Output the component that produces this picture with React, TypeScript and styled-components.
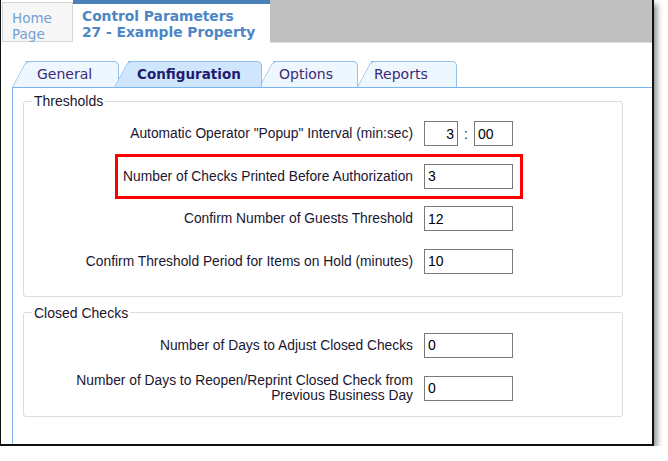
import React, { FC } from "react";
import styled, { createGlobalStyle } from "styled-components";

const GlobalStyle = createGlobalStyle`
  body {
    margin: 0;
    background: #fff;
    font-family: "Liberation Sans", Arial, sans-serif;
  }
`;

const Window = styled.div`
  width: 651px;
  height: 444px;
  display: flex;
  flex-direction: column;
  background: #fff;
  border-left: 1px solid #111;
  border-right: 2px solid #111;
  border-bottom: 2px solid #111;
  box-shadow: 3px 4px 6px rgba(0, 0, 0, 0.45);
`;

const Header = styled.div`
  display: flex;
  height: 43px;
  font-family: "DejaVu Sans", Verdana, sans-serif;
  line-height: 16px;
`;

const HomeTab = styled.div`
  box-sizing: border-box;
  width: 71px;
  height: 40px;
  margin: 2px 0 0 1px;
  padding: 7px 0 0 9px;
  background: #f7f7f7;
  border: 1px solid #d6d6d6;
  color: #73a0d4;
  font-size: 13.5px;
`;

const PageTab = styled.div`
  box-sizing: border-box;
  width: 197px;
  height: 43px;
  padding: 4px 0 0 9px;
  border-top: 4px solid #4a7fb8;
  background: #fff;
  color: #4c86c4;
  font-size: 13.8px;
  font-weight: bold;
`;

const HeaderFill = styled.div`
  flex: 1;
  height: 42px;
  background: #c0c0c0;
  border-bottom: 1px solid #dedede;
`;

const Content = styled.div`
  flex: 1;
  display: flex;
  flex-direction: column;
  padding: 18px 0 0 11px;
`;

const TabStrip = styled.div`
  display: flex;
  height: 26px;
  border-bottom: 1px solid #7ab3ee;
`;

const SLANT = 14;

const Tab = styled.div<{ $active?: boolean; $w: number; $pl: number; $ml: number; $z: number }>`
  position: relative;
  z-index: ${(p) => (p.$active ? 10 : p.$z)};
  box-sizing: border-box;
  width: ${(p) => p.$w}px;
  height: 26px;
  margin-left: ${(p) => p.$ml}px;
  padding: 0 0 0 ${(p) => p.$pl}px;
  display: flex;
  align-items: center;
  font-family: "DejaVu Sans", Verdana, sans-serif;
  font-size: ${(p) => (p.$active ? "13.5px" : "14px")};
  font-weight: ${(p) => (p.$active ? "bold" : "normal")};
  color: ${(p) => (p.$active ? "#1f1b6e" : "#3b2a78")};

  &::before {
    content: "";
    position: absolute;
    z-index: -1;
    top: 0;
    bottom: 0;
    left: ${SLANT}px;
    right: 0;
    background: ${(p) => (p.$active ? "#cfe6fc" : "#eef6fe")};
    border-top: 1px solid #8fc0f0;
    border-right: 1px solid #8fc0f0;
    border-top-right-radius: 5px;
  }

  &::after {
    content: "";
    position: absolute;
    z-index: -1;
    top: 0;
    bottom: 0;
    left: 0;
    width: ${SLANT + 10}px;
    background: ${(p) => (p.$active ? "#cfe6fc" : "#eef6fe")};
    border-top: 1px solid #8fc0f0;
    border-left: 1px solid #8fc0f0;
    border-top-left-radius: 5px;
    transform-origin: bottom left;
    transform: skewX(-28deg);
  }
`;

const Panel = styled.div`
  flex: 1;
  border-left: 1px solid #7ab3ee;
  padding-top: 5px;
`;

const Group = styled.fieldset<{ $top: number; $bottom: number }>`
  margin: ${(p) => p.$top}px 29px 0 10px;
  padding: 12px 0 ${(p) => p.$bottom}px 0;
  border: 1px solid #dcdcdc;
  border-radius: 3px;
  min-width: 0;
`;

const Legend = styled.legend`
  margin-left: 8px;
  padding: 0 2px;
  font-size: 14px;
  line-height: 16px;
  color: #1b1530;
`;

const Rows = styled.div<{ $gap: number }>`
  display: flex;
  flex-direction: column;
  gap: ${(p) => p.$gap}px;
`;

const Row = styled.div<{ $marked?: boolean }>`
  position: relative;
  display: grid;
  grid-template-columns: 389px 89px;
  column-gap: 11px;
  height: 25px;
  align-items: center;

  ${(p) =>
    p.$marked &&
    `
    &::after {
      content: "";
      position: absolute;
      left: 91px;
      width: 408px;
      top: -10px;
      bottom: -10px;
      box-sizing: border-box;
      border: 3px solid #ff0000;
      pointer-events: none;
    }
  `}
`;

const Label = styled.div`
  display: flex;
  align-items: center;
  justify-content: flex-end;
  height: 25px;
  text-align: right;
  font-size: 13.8px;
  line-height: 15px;
  color: #1b1530;
`;

const Field = styled.input<{ $w?: number; $right?: boolean }>`
  box-sizing: border-box;
  width: ${(p) => (p.$w ? `${p.$w}px` : "100%")};
  height: 25px;
  margin: 0;
  padding: 0 3px;
  border: 1px solid #7a7a7a;
  border-radius: 0;
  background: #fff;
  color: #000;
  font-family: "Liberation Sans", Arial, sans-serif;
  font-size: 14px;
  text-align: ${(p) => (p.$right ? "right" : "left")};
  outline: none;
`;

const TimeBox = styled.div`
  display: flex;
  align-items: center;
`;

const Colon = styled.span`
  width: 16px;
  text-align: center;
  font-size: 14px;
  color: #1b1530;
`;

const tabs = [
  { name: "General", w: 107, pl: 25, ml: 0 },
  { name: "Configuration", w: 148, pl: 23, ml: -5, active: true },
  { name: "Options", w: 99, pl: 20, ml: -3 },
  { name: "Reports", w: 100, pl: 17, ml: -1 },
];

const App: FC = () => (
  <>
    <GlobalStyle />
    <Window>
      <Header>
        <HomeTab>
          Home
          <br />
          Page
        </HomeTab>
        <PageTab>
          Control Parameters
          <br />
          27 - Example Property
        </PageTab>
        <HeaderFill />
      </Header>
      <Content>
        <TabStrip>
          {tabs.map((t, i) => (
            <Tab key={t.name} $active={t.active} $w={t.w} $pl={t.pl} $ml={t.ml} $z={i + 1}>
              {t.name}
            </Tab>
          ))}
        </TabStrip>
        <Panel>
          <Group $top={0} $bottom={22}>
            <Legend>Thresholds</Legend>
            <Rows $gap={17.5}>
              <Row>
                <Label>Automatic Operator "Popup" Interval (min:sec)</Label>
                <TimeBox>
                  <Field $w={34} $right value="3" readOnly />
                  <Colon>:</Colon>
                  <Field $w={39} value="00" readOnly />
                </TimeBox>
              </Row>
              <Row $marked>
                <Label>Number of Checks Printed Before Authorization</Label>
                <Field value="3" readOnly />
              </Row>
              <Row>
                <Label>Confirm Number of Guests Threshold</Label>
                <Field value="12" readOnly />
              </Row>
              <Row>
                <Label>Confirm Threshold Period for Items on Hold (minutes)</Label>
                <Field value="10" readOnly />
              </Row>
            </Rows>
          </Group>
          <Group $top={8} $bottom={15}>
            <Legend>Closed Checks</Legend>
            <Rows $gap={18}>
              <Row>
                <Label>Number of Days to Adjust Closed Checks</Label>
                <Field value="0" readOnly />
              </Row>
              <Row>
                <Label>
                  Number of Days to Reopen/Reprint Closed Check from
                  <br />
                  Previous Business Day
                </Label>
                <Field value="0" readOnly />
              </Row>
            </Rows>
          </Group>
        </Panel>
      </Content>
    </Window>
  </>
);

export default App;
